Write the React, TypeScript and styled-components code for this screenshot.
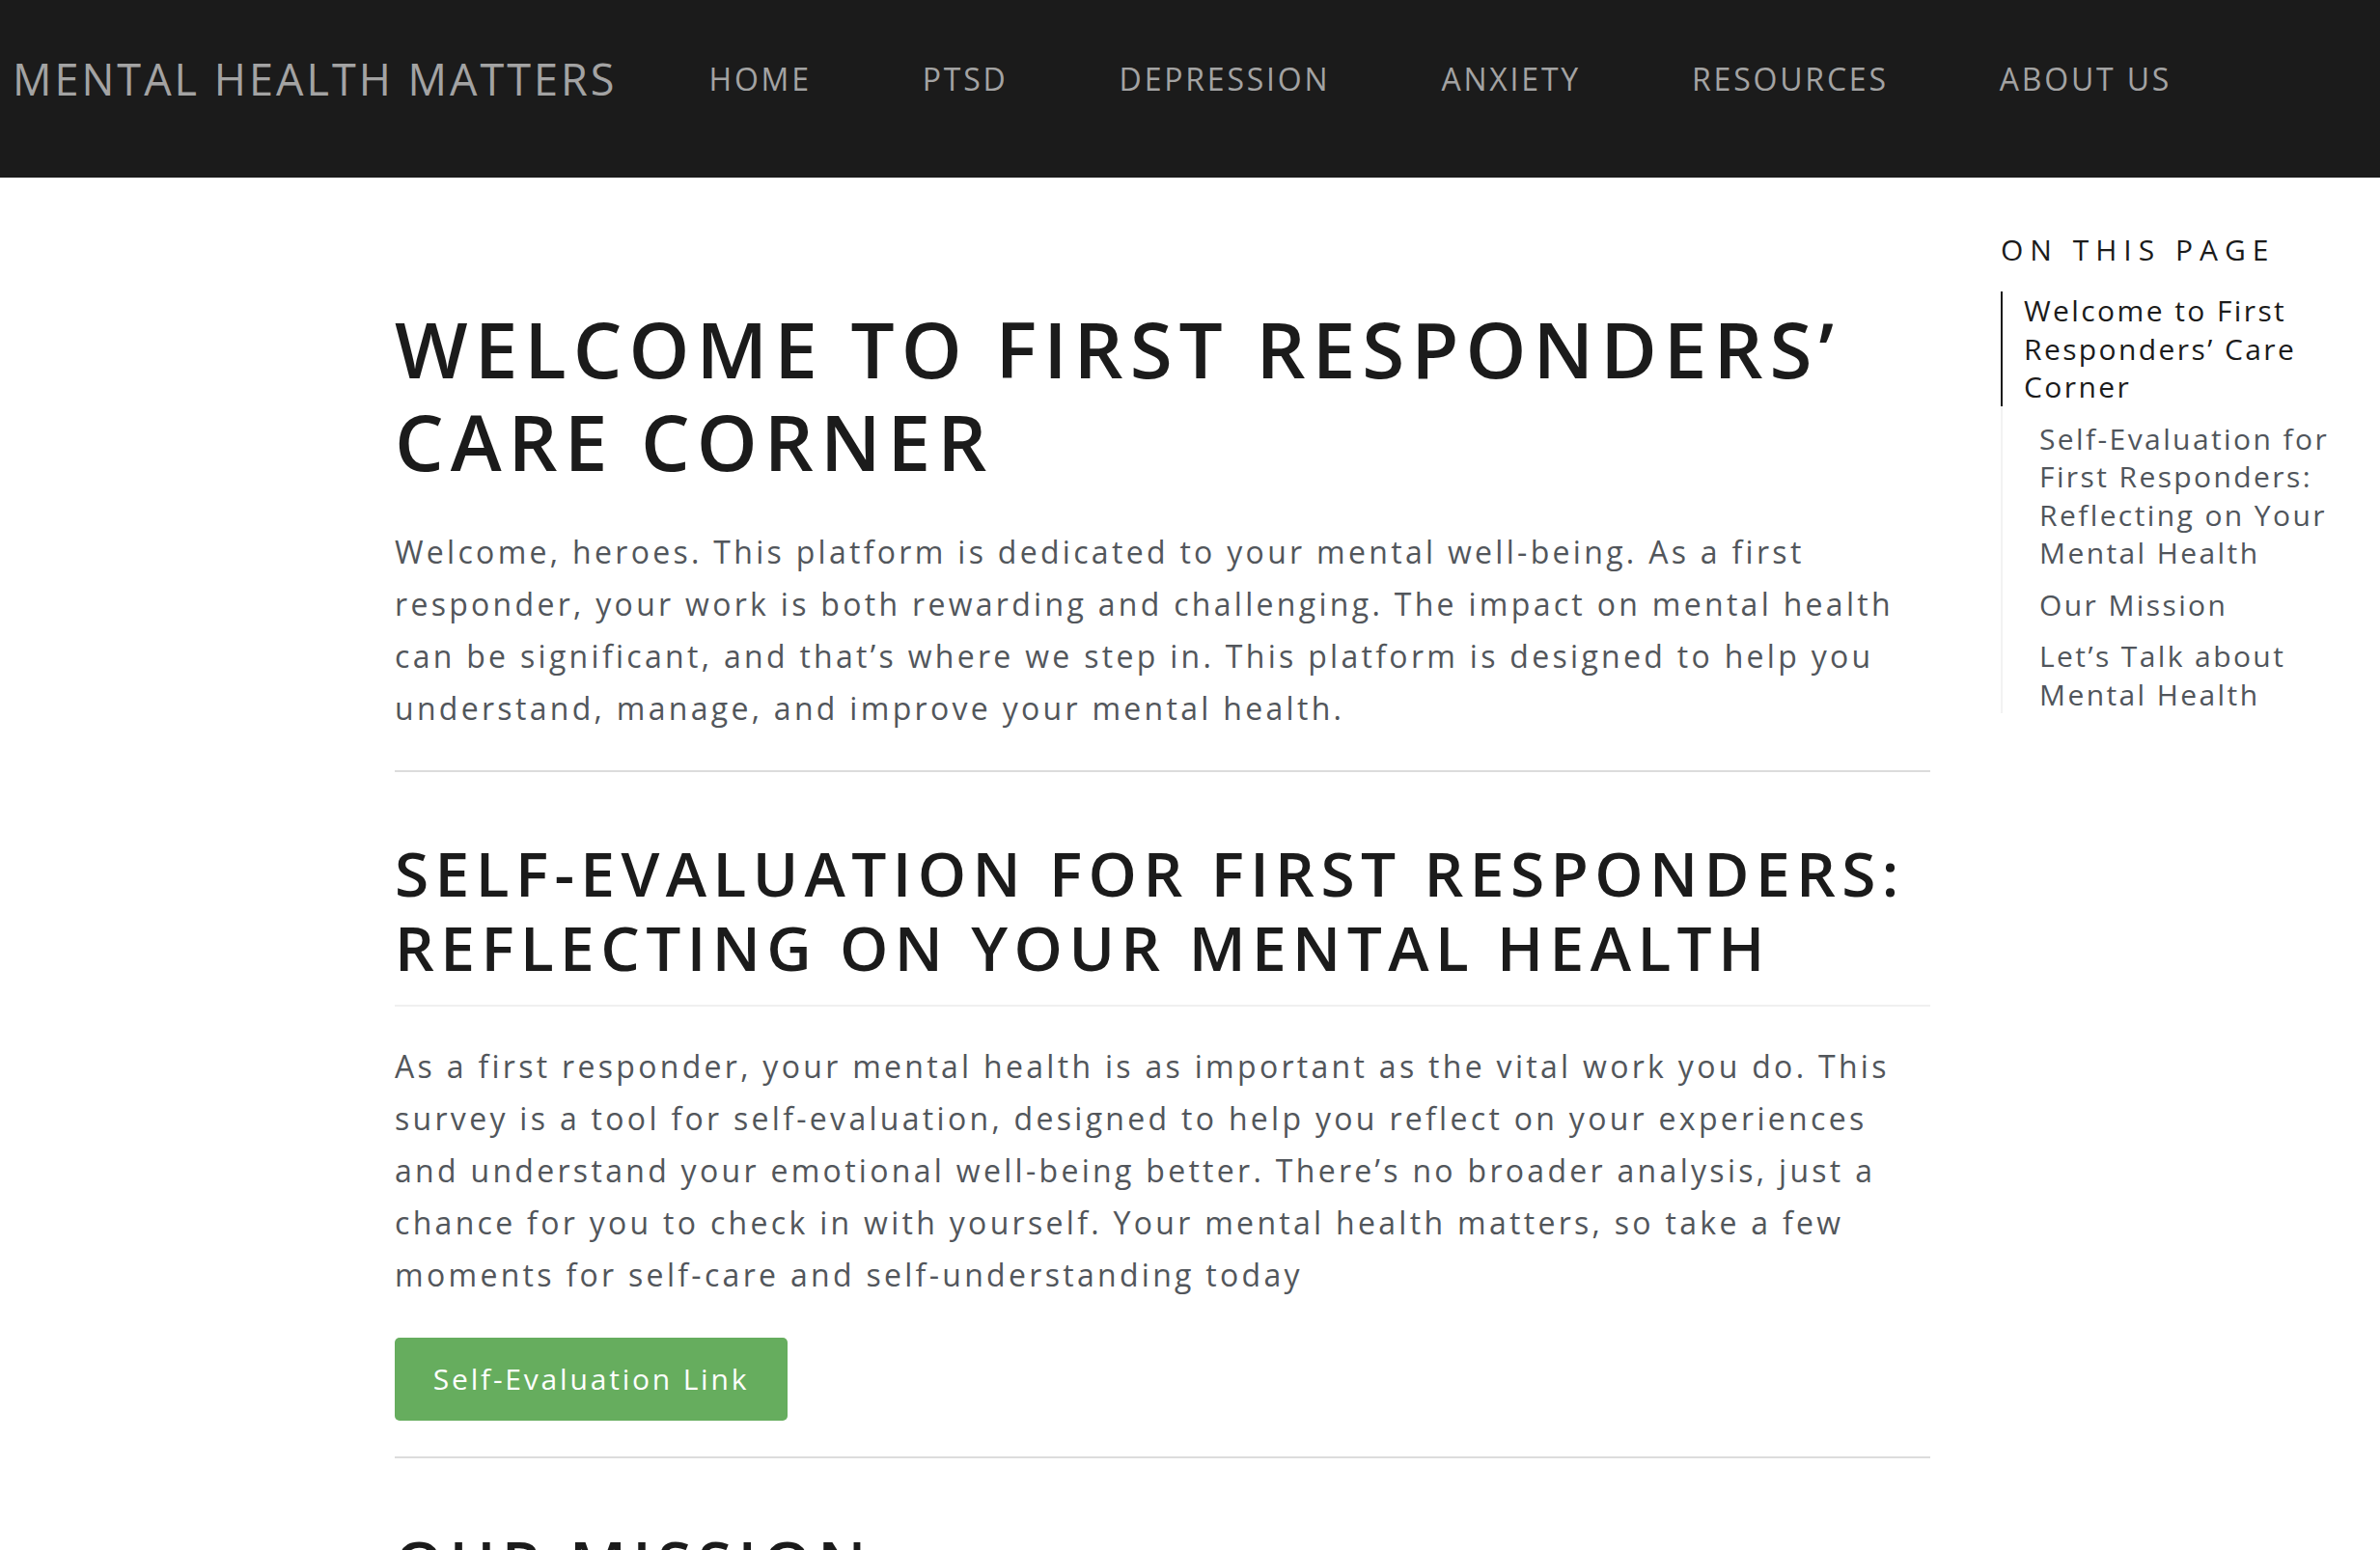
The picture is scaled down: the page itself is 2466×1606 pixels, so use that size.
import React from "react";
import styled, { createGlobalStyle } from "styled-components";

const Global = createGlobalStyle`
  html, body { margin: 0; padding: 0; background: #ffffff; }
  body { font-family: "Open Sans", "Noto Sans", sans-serif; -webkit-font-smoothing: antialiased; }
  * { box-sizing: border-box; }
`;

const Header = styled.header`
  height: 184px;
  background: #1b1b1b;
  display: flex;
  align-items: center;
  padding: 0 0 22px 13px;
`;

const Logo = styled.a`
  font-size: 45px;
  color: #a3a3a3;
  text-decoration: none;
  letter-spacing: 3px;
  white-space: nowrap;
`;

const Nav = styled.nav`
  display: flex;
  align-items: center;
  gap: 115px;
  margin-left: 95px;
`;

const NavLink = styled.a`
  font-size: 32px;
  color: #a3a3a3;
  text-decoration: none;
  letter-spacing: 2.8px;
  white-space: nowrap;
`;

const Page = styled.div`
  display: flex;
  align-items: flex-start;
  padding-left: 409px;
  gap: 73px;
`;

const Content = styled.main`
  width: 1591px;
  flex: none;
  padding-top: 129px;
`;

const H1 = styled.h1`
  margin: 0 0 2px;
  font-size: 80px;
  line-height: 1.2;
  font-weight: 600;
  color: #1b1b1b;
  text-transform: uppercase;
  letter-spacing: 7px;
`;

const H2 = styled.h2`
  margin: 0 0 -3px;
  padding-bottom: 20px;
  font-size: 64px;
  line-height: 1.2;
  font-weight: 600;
  color: #1b1b1b;
  text-transform: uppercase;
  letter-spacing: 6.4px;
  border-bottom: 2px solid #f0f0f0;
`;

const Para = styled.p`
  margin: 0;
  font-size: 32px;
  line-height: 54px;
  color: #52565b;
  letter-spacing: 3.3px;
`;

const Section = styled.section<{ $top: number }>`
  display: flex;
  flex-direction: column;
  align-items: flex-start;
  gap: 38px;
  padding-top: ${(p) => p.$top}px;
  padding-bottom: 37px;
  border-bottom: 2px solid #dcdcdc;
`;

const Button = styled.a`
  display: inline-flex;
  align-items: center;
  justify-content: center;
  height: 86px;
  width: 407px;
  background: #66ad5e;
  color: #ffffff;
  border-radius: 5px;
  font-size: 30px;
  letter-spacing: 2.8px;
  text-decoration: none;
`;

const Aside = styled.aside`
  width: 372px;
  flex: none;
  padding-top: 240px;
  margin-top: -184px;
`;

const AsideTitle = styled.div`
  font-size: 30px;
  color: #1b1b1b;
  letter-spacing: 7px;
  text-transform: uppercase;
  line-height: 38px;
  margin-bottom: 24px;
`;

const TocList = styled.ul`
  list-style: none;
  margin: 0;
  padding: 0;
  border-left: 2px solid #f2f2f2;
  display: flex;
  flex-direction: column;
  gap: 14px;
`;

const TocItem = styled.li<{ $active?: boolean }>`
  margin-left: -2px;
  border-left: 2px solid ${(p) => (p.$active ? "#1b1b1b" : "transparent")};
  padding-left: ${(p) => (p.$active ? 22 : 38)}px;
  font-size: 30px;
  line-height: 39.5px;
  letter-spacing: 2.4px;
  color: ${(p) => (p.$active ? "#1b1b1b" : "#50555b")};
`;

const MissionTitle = styled.h2`
  margin: 0;
  padding-top: 70px;
  font-size: 64px;
  line-height: 1.2;
  font-weight: 600;
  color: #1b1b1b;
  text-transform: uppercase;
  letter-spacing: 6.4px;
`;

export default function App() {
  return (
    <>
      <Global />
      <Header>
        <Logo href="#">MENTAL HEALTH MATTERS</Logo>
        <Nav>
          {["HOME", "PTSD", "DEPRESSION", "ANXIETY", "RESOURCES", "ABOUT US"].map((n) => (
            <NavLink key={n} href="#">
              {n}
            </NavLink>
          ))}
        </Nav>
      </Header>
      <Page>
        <Content>
          <Section $top={0}>
            <H1>Welcome to First Responders’ Care Corner</H1>
            <Para>
              Welcome, heroes. This platform is dedicated to your mental well-being. As a first
              responder, your work is both rewarding and challenging. The impact on mental health
              can be significant, and that’s where we step in. This platform is designed to help you
              understand, manage, and improve your mental health.
            </Para>
          </Section>
          <Section $top={67}>
            <H2>Self-Evaluation for First Responders: Reflecting on Your Mental Health</H2>
            <Para>
              As a first responder, your mental health is as important as the vital work you do. This
              survey is a tool for self-evaluation, designed to help you reflect on your experiences
              and understand your emotional well-being better. There’s no broader analysis, just a
              chance for you to check in with yourself. Your mental health matters, so take a few
              moments for self-care and self-understanding today
            </Para>
            <Button href="#">Self-Evaluation Link</Button>
          </Section>
          <MissionTitle>Our Mission</MissionTitle>
        </Content>
        <Aside>
          <AsideTitle>On this page</AsideTitle>
          <TocList>
            <TocItem $active>Welcome to First Responders’ Care Corner</TocItem>
            <TocItem>Self-Evaluation for First Responders: Reflecting on Your Mental Health</TocItem>
            <TocItem>Our Mission</TocItem>
            <TocItem>Let’s Talk about Mental Health</TocItem>
          </TocList>
        </Aside>
      </Page>
    </>
  );
}
